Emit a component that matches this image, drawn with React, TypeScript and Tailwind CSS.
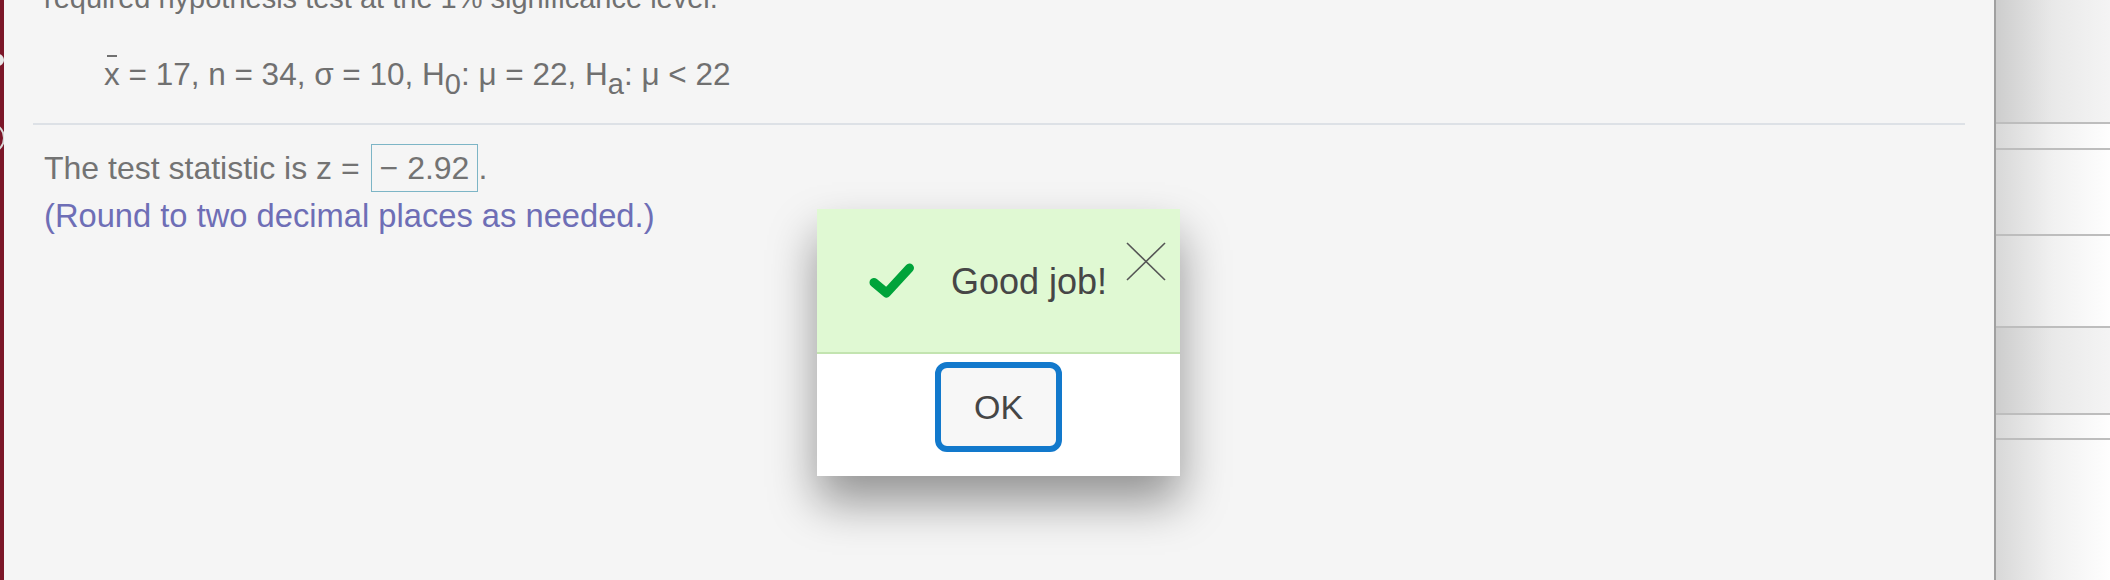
import React from "react";

const font = { fontFamily: '"Liberation Sans", Arial, Helvetica, sans-serif' };

function RightRow({ h, dark }: { h: string; dark?: boolean }) {
  return (
    <div
      className={`${h} w-full bg-gradient-to-r ${
        dark ? "from-[#cdcdcd] via-[#e9e9e9] to-[#f4f4f4]" : "from-[#d8d8d8] via-[#f1f1f1] to-[#fefefe]"
      }`}
    />
  );
}

function Line() {
  return <div className="h-[2px] w-full bg-[#bdbdbd]" />;
}

export default function App() {
  return (
    <div className="w-[2110px] h-[580px] flex overflow-hidden bg-[#f5f5f5]" style={font}>
      {/* left crimson bar */}
      <div className="relative w-[4px] h-full bg-[#7b1628] shrink-0">
        <div className="absolute left-[-8px] top-[54px] w-[12px] h-[12px] rounded-full bg-[#e8e8e8]" />
        <div className="absolute left-[-27px] top-[122px] w-[32px] h-[32px] rounded-full border-2 border-[#d9d9d9]" />
      </div>

      {/* main panel */}
      <div className="relative w-[1990px] h-full bg-[#f5f5f5] px-[40px] shrink-0">
        <div className="-mt-[22px] text-[29px] leading-[40px] text-[#707070] whitespace-nowrap">
          required hypothesis test at the 1% significance level.
        </div>

        <div className="mt-[36px] pl-[60px] text-[31.5px] leading-[40px] text-[#707070] whitespace-nowrap">
          <span className="relative">
            x
            <span className="absolute left-[3px] top-[-1px] w-[10px] h-[1.5px] bg-[#707070]" />
          </span>
          {" = 17, n = 34, σ = 10, H"}
          <span className="relative top-[9px] text-[29px]">0</span>
          {": μ = 22, H"}
          <span className="relative top-[9px] text-[29px]">a</span>
          {": μ < 22"}
        </div>

        <div className="mt-[28px] -mx-[11px] h-[2px] bg-[#dde1e6]" />

        <div className="mt-[19px] text-[32px] leading-[48px] text-[#737373] whitespace-nowrap">
          <div>
            The test statistic is z ={" "}
            <span className="inline-block align-baseline border border-[#7db5c6] px-[8px] leading-[46px] ml-[2px]">
              − 2.92
            </span>
            .
          </div>
          <div className="text-[32.7px] text-[#6e6eb6]">(Round to two decimal places as needed.)</div>
        </div>

        {/* modal overlay */}
        <div className="absolute left-[813px] top-[209px] w-[363px] h-[267px] flex flex-col bg-white shadow-[0_26px_44px_rgba(0,0,0,0.4)]">
          <div className="relative h-[145px] bg-[#e0f9d3] border-b-2 border-[#c3e4b0] flex items-center pl-[52px]">
            <svg width="46" height="35" viewBox="0 0 46 35" className="shrink-0">
              <polyline
                points="5,19.5 17.5,30 40.5,5"
                fill="none"
                stroke="#00a33a"
                strokeWidth="9"
                strokeLinecap="round"
                strokeLinejoin="round"
              />
            </svg>
            <span className="ml-[36px] mt-[2px] text-[36px] text-[#464646]">Good job!</span>
            <svg width="40" height="39" viewBox="0 0 40 39" className="absolute right-[14px] top-[33px]">
              <line x1="1" y1="1" x2="39" y2="38" stroke="#555" strokeWidth="1.6" />
              <line x1="39" y1="1" x2="1" y2="38" stroke="#555" strokeWidth="1.6" />
            </svg>
          </div>
          <div className="flex-1 flex justify-center pt-[8px]">
            <button className="w-[127px] h-[90px] rounded-[12px] border-[6px] border-[#1279cc] bg-[#f7f7f7] text-[34px] text-[#464646] flex items-center justify-center">
              OK
            </button>
          </div>
        </div>
      </div>

      {/* right panel */}
      <div className="flex-1 h-full flex flex-col border-l-2 border-[#a0a0a0]">
        <RightRow h="h-[122px]" dark />
        <Line />
        <RightRow h="h-[24px]" />
        <Line />
        <RightRow h="h-[84px]" />
        <Line />
        <RightRow h="h-[90px]" />
        <Line />
        <RightRow h="h-[85px]" dark />
        <Line />
        <RightRow h="h-[23px]" />
        <Line />
        <RightRow h="h-[140px]" />
      </div>
    </div>
  );
}
